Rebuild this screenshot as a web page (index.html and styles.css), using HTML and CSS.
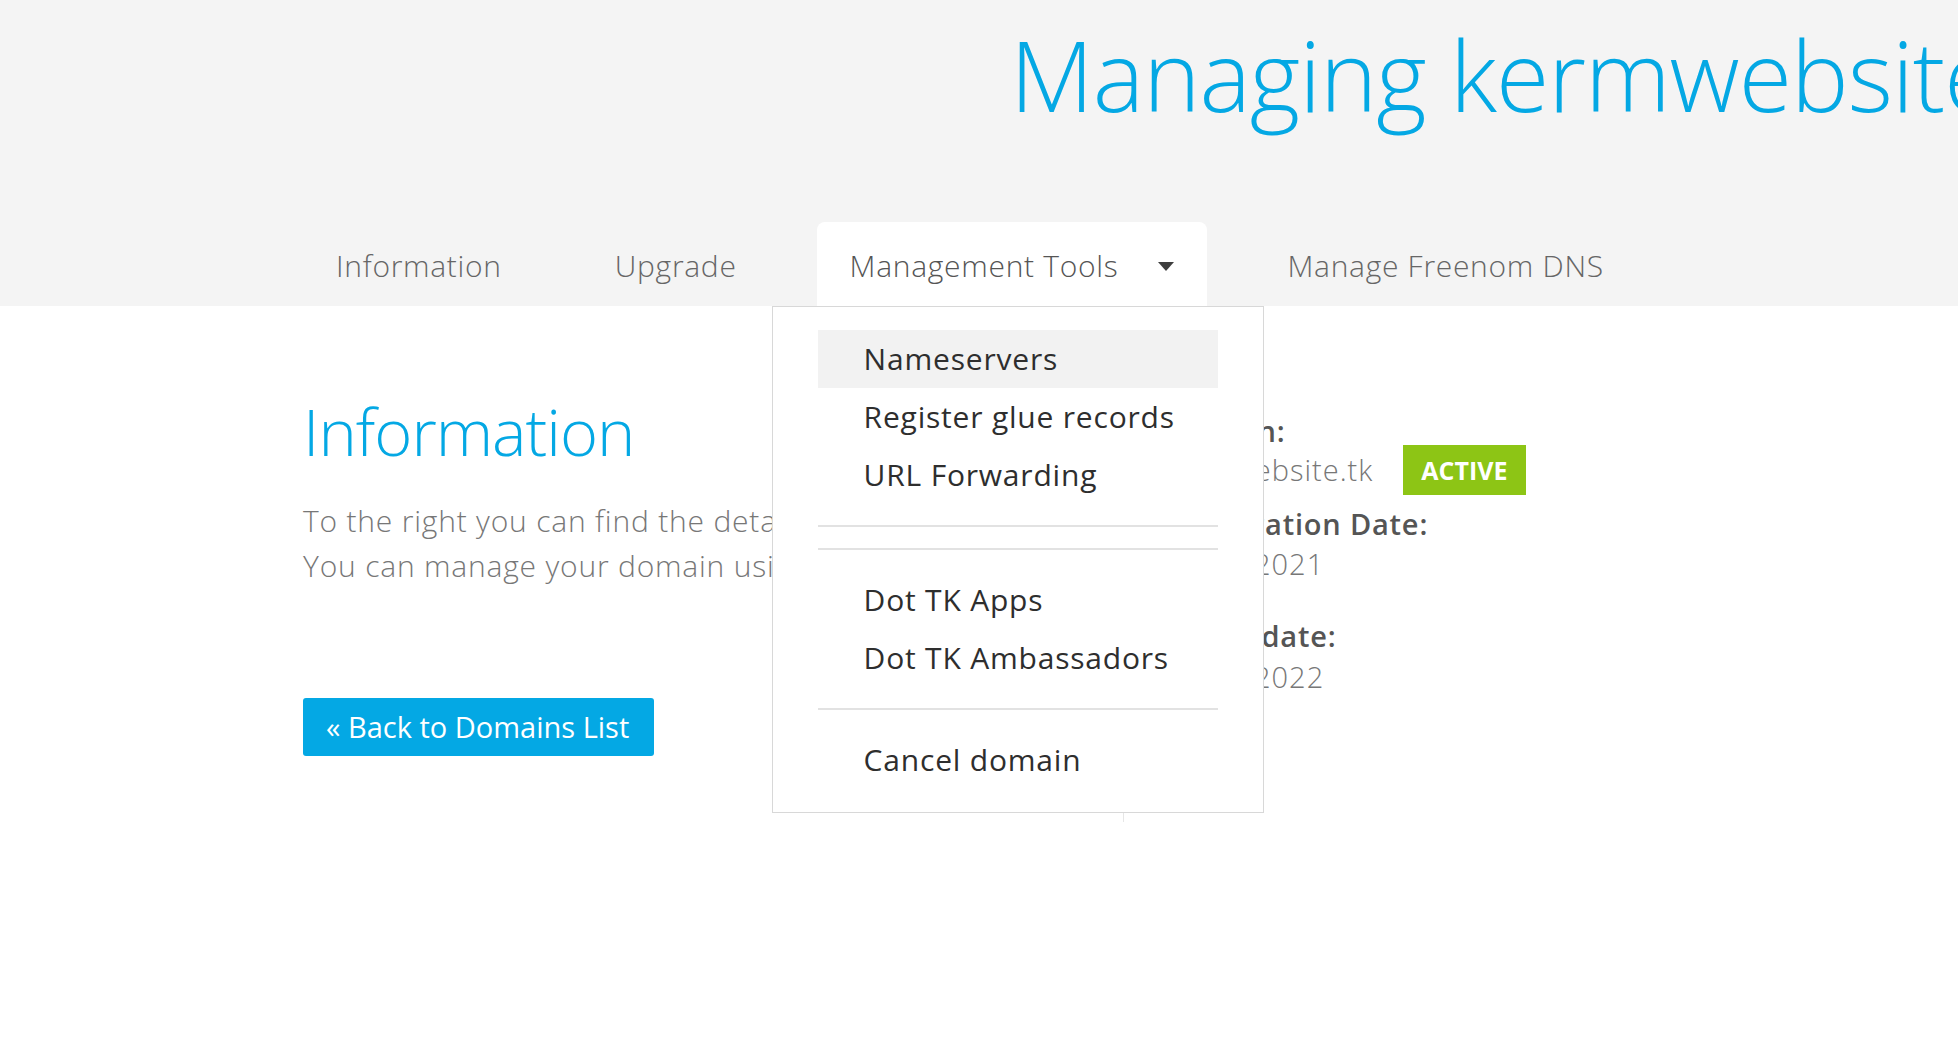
FILE: index.html
```html
<!DOCTYPE html>
<html lang="en">
<head>
<meta charset="utf-8">
<title>Managing kermwebsite.tk</title>
<link rel="stylesheet" href="styles.css">
</head>
<body>
<header class="page-header">
  <h1 class="page-title">Managing kermwebsite.tk</h1>
  <nav class="tabs">
    <a class="tab" href="#">Information</a>
    <a class="tab" href="#">Upgrade</a>
    <div class="tab tab-active">
      <span>Management Tools</span>
      <span class="caret"></span>
      <div class="dropdown">
        <a class="dd-item dd-hover" href="#">Nameservers</a>
        <a class="dd-item" href="#">Register glue records</a>
        <a class="dd-item" href="#">URL Forwarding</a>
        <div class="dd-divider"></div>
        <div class="dd-divider"></div>
        <a class="dd-item" href="#">Dot TK Apps</a>
        <a class="dd-item" href="#">Dot TK Ambassadors</a>
        <div class="dd-divider"></div>
        <a class="dd-item" href="#">Cancel domain</a>
      </div>
    </div>
    <a class="tab" href="#">Manage Freenom DNS</a>
  </nav>
</header>
<main class="content">
  <section class="info-col">
    <h2 class="info-title">Information</h2>
    <p class="info-text">To the right you can find the details of your domain.<br>You can manage your domain using the tabs above.</p>
    <a class="btn-back" href="#">&laquo; Back to Domains List</a>
  </section>
  <section class="details-col">
    <div class="d-label">Domain:</div>
    <div class="d-value-row"><span class="d-value">kermwebsite.tk</span><span class="badge">ACTIVE</span></div>
    <div class="d-label d-label-2">Registration Date:</div>
    <div class="d-value d-value-2">08/12/2021</div>
    <div class="d-label d-label-3">Expiry date:</div>
    <div class="d-value d-value-3">08/12/2022</div>
  </section>
</main>
</body>
</html>
```
FILE: styles.css
```css
html, body {
  margin: 0;
  padding: 0;
  overflow: hidden;
  background: #ffffff;
  font-family: "Open Sans", "Liberation Sans", sans-serif;
}

a { text-decoration: none; }

.page-header {
  background: #f4f4f4;
  height: 306px;
  padding-left: 303px;
  box-sizing: border-box;
  padding-top: 16px;
  white-space: nowrap;
}

.page-title {
  margin: 0 0 0 707px;
  font-size: 97px;
  line-height: 1.2;
  font-weight: 300;
  letter-spacing: -1px;
  color: #04a8e4;
  white-space: nowrap;
}

.tabs {
  display: flex;
  margin-top: 90px;
  gap: 47px;
}

.tab {
  display: flex;
  align-items: center;
  padding: 23px 33px 19px;
  font-size: 30px;
  line-height: 42px;
  font-weight: 300;
  letter-spacing: 0.7px;
  color: #666;
}

.tab-active {
  position: relative;
  background: #ffffff;
  border-radius: 8px 8px 0 0;
  color: #555;
}

.caret {
  width: 0;
  height: 0;
  margin-left: 40px;
  border-left: 8px solid transparent;
  border-right: 8px solid transparent;
  border-top: 9px solid #3e3e3e;
}

.dropdown {
  position: absolute;
  top: 100%;
  left: -45px;
  width: 492px;
  box-sizing: border-box;
  background: #fff;
  border: 1px solid #d8d8d8;
  padding: 23px 45px 23px;
  z-index: 10;
  letter-spacing: 0;
}

.dd-item {
  display: block;
  padding-left: 46px;
  font-size: 30px;
  line-height: 58px;
  font-weight: 400;
  letter-spacing: 0.8px;
  color: #2e2e2e;
}

.dd-hover { background: #f2f2f2; }

.dd-divider {
  height: 2px;
  background: #e2e2e2;
  margin: 21px 0;
}

.content {
  display: flex;
  padding-left: 303px;
  margin-top: 85px;
}

.info-col {
  width: 820px;
  white-space: nowrap;
}

.info-title {
  margin: 0;
  font-size: 65px;
  line-height: 80px;
  font-weight: 300;
  letter-spacing: -1px;
  color: #04a8e4;
}

.info-text {
  margin: 27px 0 0;
  font-size: 30px;
  line-height: 45px;
  font-weight: 300;
  letter-spacing: 0.8px;
  color: #777;
}

.btn-back {
  display: inline-block;
  margin-top: 110px;
  height: 58px;
  line-height: 58px;
  padding: 0 25px 0 23px;
  background: #04a8e4;
  border-radius: 3px;
  color: #fff;
  font-size: 29px;
  font-weight: 400;
}

.details-col {
  border-left: 1px solid #e6e6e6;
  padding: 22px 0 124px 38px;
  white-space: nowrap;
}

.d-label {
  font-size: 29px;
  line-height: 36px;
  font-weight: 600;
  letter-spacing: 0.8px;
  color: #555;
}

.d-value {
  font-size: 29px;
  line-height: 42px;
  font-weight: 300;
  letter-spacing: 1px;
  color: #777;
}

.d-value-row {
  display: flex;
  align-items: center;
  height: 50px;
  margin-top: -4px;
}

.badge {
  display: inline-block;
  margin-left: 30px;
  height: 50px;
  line-height: 50px;
  padding: 0 18px;
  background: #8dc515;
  color: #fff;
  font-size: 25px;
  font-weight: 700;
  letter-spacing: 0;
}

.d-label-2 { margin-top: 11px; }
.d-value-2 { margin-top: 1px; }
.d-label-3 { margin-top: 33px; }
.d-value-3 { margin-top: 2px; }
```
